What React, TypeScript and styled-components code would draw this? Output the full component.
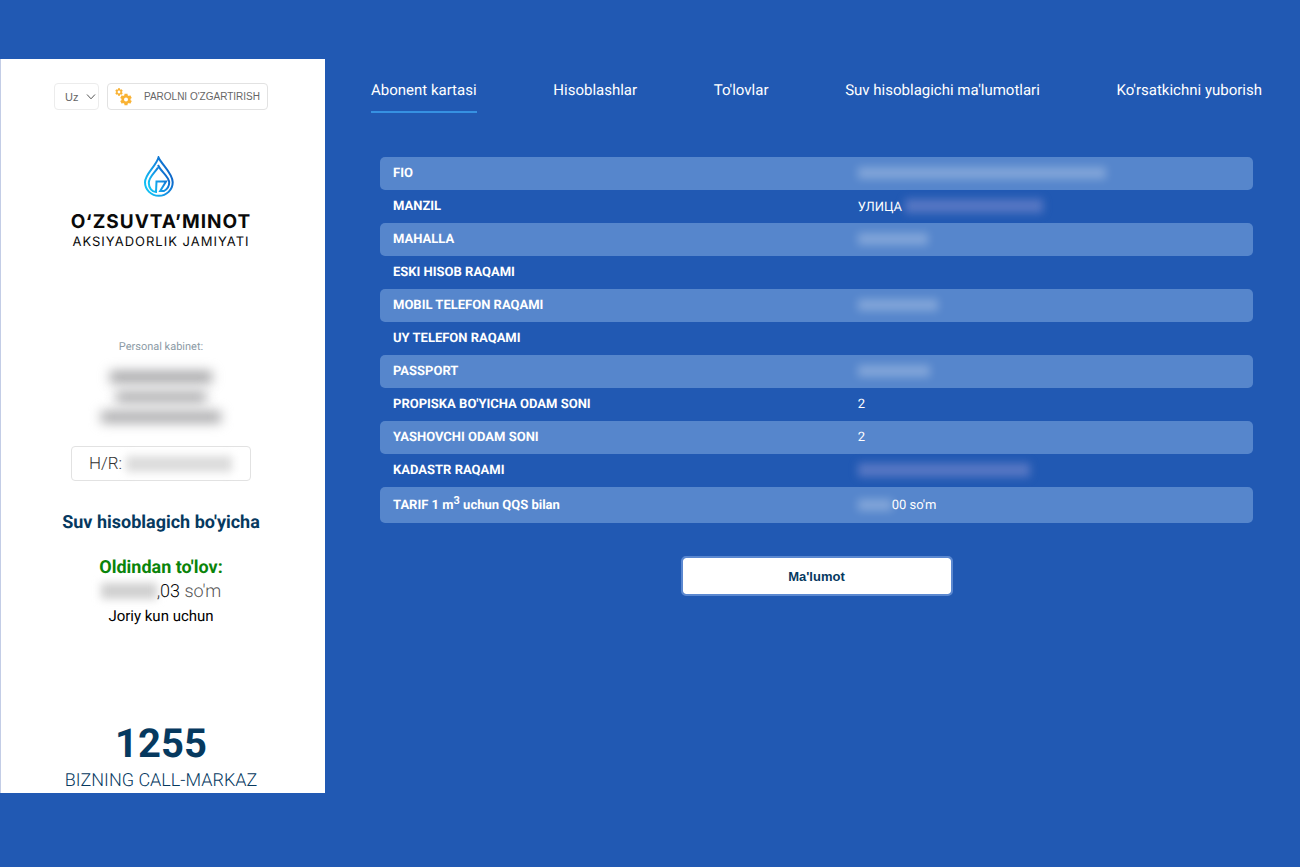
import React from "react";
import styled, { createGlobalStyle } from "styled-components";

const GlobalStyle = createGlobalStyle`
  *, *::before, *::after { box-sizing: border-box; }
  body {
    margin: 0;
    background: #2159b3;
    font-family: Roboto, "Liberation Sans", sans-serif;
    color: #fff;
    text-rendering: geometricPrecision;
  }
`;

const Page = styled.div`
  display: grid;
  grid-template-columns: minmax(300px, 1fr) 3fr;
  align-items: start;
  min-height: 100vh;
  padding: 59px 0;
`;

const Sidebar = styled.aside`
  display: flex;
  flex-direction: column;
  align-items: center;
  padding: 24px 4px 0 0;
  border-left: 1px solid #c3cde6;
  background: #fff;
  color: #000;
  text-align: center;
`;

const Controls = styled.div`
  display: flex;
  gap: 8px;
  margin-bottom: 46px;
`;

const SelectBox = styled.label`
  position: relative;
  display: block;
  width: 45px;
`;

const LanguageSelect = styled.select`
  width: 100%;
  height: 27px;
  padding: 0 0 0 10px;
  appearance: none;
  border: 1px solid #ececec;
  border-radius: 4px;
  background: #fff;
  color: #666;
  font: 11px "Liberation Sans", Arial, sans-serif;
`;

const Chevron = styled.svg`
  position: absolute;
  top: 10px;
  right: 3px;
  pointer-events: none;
`;

const PasswordButton = styled.button`
  display: flex;
  align-items: center;
  justify-content: space-between;
  width: 161px;
  height: 27px;
  padding: 0 7px;
  border: 1px solid #e2e2e2;
  border-radius: 4px;
  background: #fff;
  color: #666;
  font: 10px "Liberation Sans", Arial, sans-serif;
  white-space: nowrap;
`;

const Brand = styled.div`
  display: flex;
  flex-direction: column;
  align-items: center;
  color: #0a0a0a;
`;

const BrandName = styled.div`
  margin-top: 12px;
  font: 700 19px/24px Inter, sans-serif;
  letter-spacing: 1px;
  white-space: nowrap;
`;

const BrandKind = styled.div`
  font: 400 13px/16px Inter, sans-serif;
  letter-spacing: 1px;
  white-space: nowrap;
`;

const CabinetLabel = styled.p`
  margin: 88px 0 12px;
  color: #8c9ba6;
  font-size: 11px;
  line-height: 18px;
`;

const HiddenName = styled.div`
  display: flex;
  flex-direction: column;
  align-items: center;
  gap: 8px;
  padding: 3px 0;
`;

const Redacted = styled.span<{ $width: number; $tone: string; $height?: number; $blur?: number }>`
  display: inline-block;
  width: ${(p) => p.$width}px;
  height: ${(p) => p.$height ?? 12}px;
  background: ${(p) => p.$tone};
  filter: blur(${(p) => p.$blur ?? 4}px);
  vertical-align: -2px;
`;

const Account = styled.div`
  display: flex;
  align-items: center;
  gap: 4px;
  width: 180px;
  height: 35px;
  margin: 20px 0 30px;
  padding: 0 17px;
  border: 1px solid #e2e2e2;
  border-radius: 4px;
  color: #333;
  font-size: 17px;
  font-weight: 300;
`;

const MeterTitle = styled.h2`
  margin: 0 0 21px;
  color: #06395f;
  font-size: 18px;
  font-weight: 700;
  line-height: 24px;
`;

const Balance = styled.div`
  font-size: 18px;
  font-weight: 300;
  line-height: 24px;
`;

const BalanceTitle = styled.div`
  color: #0a840a;
  font-weight: 700;
`;

const Currency = styled.span`
  color: #555;
`;

const BalanceNote = styled.div`
  font-size: 15px;
  font-weight: 400;
`;

const CallCenter = styled.footer`
  margin-top: 92px;
  color: #06395f;
  font-size: 18px;
  font-weight: 300;
  line-height: 24px;
`;

const CallNumber = styled.div`
  padding-bottom: 1px;
  font-size: 40px;
  font-weight: 700;
  line-height: 48px;
`;

const Main = styled.main`
  display: flex;
  flex-direction: column;
  padding: 17px 38px 0 46px;
`;

const Tabs = styled.nav`
  display: flex;
  justify-content: space-between;
  margin-bottom: 44px;
`;

const Tab = styled.a<{ $active?: boolean }>`
  padding: 4px 0 11px;
  border-bottom: 2px solid ${(p) => (p.$active ? "#3691e2" : "transparent")};
  color: #fff;
  font-size: 15px;
  line-height: 20px;
  text-decoration: none;
  white-space: nowrap;
`;

const CardTable = styled.table`
  margin: 0 9px;
  border-spacing: 0;
  table-layout: fixed;
  font-size: 13px;
  line-height: 15px;
  text-align: left;
`;

const Row = styled.tr<{ $tall?: boolean }>`
  height: ${(p) => (p.$tall ? 36 : 33)}px;

  &:nth-child(odd) > * {
    background: #5686cc;
  }
`;

const LabelCell = styled.th`
  width: 53%;
  padding: 0 13px;
  border-radius: 5px 0 0 5px;
  font-weight: 700;

  sup {
    font-size: 11px;
    line-height: 0;
  }
`;

const ValueCell = styled.td`
  padding: 0 15px;
  border-radius: 0 5px 5px 0;
  white-space: nowrap;
`;

const InfoButton = styled.button`
  align-self: center;
  width: 272px;
  height: 40px;
  margin-top: 33px;
  border: 2px solid #5b88d0;
  border-radius: 5px;
  background: #fff;
  background-clip: padding-box;
  color: #06395f;
  font: 700 13px "Liberation Sans", Arial, sans-serif;
`;

function gearPath(cx: number, cy: number, outer: number, inner: number, hole: number) {
  const points: string[] = [];
  for (let i = 0; i < 6; i++) {
    const base = (i * Math.PI) / 3 - Math.PI / 2;
    const corners: [number, number][] = [
      [inner, -0.36],
      [outer, -0.26],
      [outer, 0.26],
      [inner, 0.36],
    ];
    corners.forEach(([r, a]) =>
      points.push(`${(cx + r * Math.cos(base + a)).toFixed(2)} ${(cy + r * Math.sin(base + a)).toFixed(2)}`)
    );
  }
  return `M${points.join("L")}ZM${cx - hole} ${cy}a${hole} ${hole} 0 1 0 ${hole * 2} 0a${hole} ${hole} 0 1 0 ${-hole * 2} 0Z`;
}

const GearsIcon = () => (
  <svg width="18" height="18" viewBox="0 0 18 18" fill="#f9b233" fillRule="evenodd" aria-hidden="true">
    <path d={gearPath(4, 4, 3.9, 2.9, 1.4)} />
    <path d={gearPath(11, 11.5, 6, 4.6, 2)} />
  </svg>
);

const DropLogo = () => (
  <svg width="36" height="42" viewBox="0 0 36 42" fill="none" aria-hidden="true">
    <defs>
      <linearGradient id="drop" x1="0" y1="0.8" x2="1" y2="0.2">
        <stop offset="0" stopColor="#12c4f5" />
        <stop offset="0.5" stopColor="#1491e4" />
        <stop offset="1" stopColor="#0b55bd" />
      </linearGradient>
    </defs>
    <g stroke="url(#drop)" strokeWidth="2">
      <path d="M15.500 1.500C18.500 8.500 29.700 17 29.700 26.300A13.800 13.500 0 0 1 2 26.300C2 18 12.500 11 15.500 1.500Z" />
      <path d="M15 11.500C12.500 16 5.800 21 5.800 27C5.800 32 9 36 13 36L13.500 25.500H23L17.200 35H21C24.500 33 26.200 30 26.200 26.500C26.200 20.500 18 16 15 9" />
    </g>
  </svg>
);

const onCard = "rgba(255, 255, 255, 0.26)";
const onPage = "rgba(150, 155, 215, 0.45)";

const rows: { label: React.ReactNode; value?: React.ReactNode; tall?: boolean }[] = [
  { label: "FIO", value: <Redacted $width={248} $tone={onCard} /> },
  { label: "MANZIL", value: <>УЛИЦА <Redacted $width={138} $tone={onPage} $height={14} /></> },
  { label: "MAHALLA", value: <Redacted $width={70} $tone={onCard} /> },
  { label: "ESKI HISOB RAQAMI" },
  { label: "MOBIL TELEFON RAQAMI", value: <Redacted $width={80} $tone={onCard} /> },
  { label: "UY TELEFON RAQAMI" },
  { label: "PASSPORT", value: <Redacted $width={72} $tone={onCard} /> },
  { label: "PROPISKA BO'YICHA ODAM SONI", value: "2" },
  { label: "YASHOVCHI ODAM SONI", value: "2" },
  { label: "KADASTR RAQAMI", value: <Redacted $width={172} $tone={onPage} $height={14} /> },
  {
    label: <>TARIF 1 m<sup>3</sup> uchun QQS bilan</>,
    value: <><Redacted $width={34} $tone={onCard} />00 so'm</>,
    tall: true,
  },
];

const tabs = ["Abonent kartasi", "Hisoblashlar", "To'lovlar", "Suv hisoblagichi ma'lumotlari", "Ko'rsatkichni yuborish"];

export default function App() {
  return (
    <>
      <GlobalStyle />
      <Page>
        <Sidebar>
          <Controls>
            <SelectBox>
              <LanguageSelect aria-label="Til" defaultValue="uz">
                <option value="uz">Uz</option>
              </LanguageSelect>
              <Chevron width="10" height="8" viewBox="0 0 10 8" fill="none" stroke="#555" aria-hidden="true">
                <path d="M1 1.500L5 5.800L9 1.500" />
              </Chevron>
            </SelectBox>
            <PasswordButton type="button">
              <GearsIcon />
              PAROLNI O'ZGARTIRISH
            </PasswordButton>
          </Controls>

          <Brand>
            <DropLogo />
            <BrandName>O‘ZSUVTA’MINOT</BrandName>
            <BrandKind>AKSIYADORLIK JAMIYATI</BrandKind>
          </Brand>

          <CabinetLabel>Personal kabinet:</CabinetLabel>
          <HiddenName>
            <Redacted $width={102} $tone="#a4a4a6" $blur={6} />
            <Redacted $width={90} $tone="#aeaeb0" $blur={6} />
            <Redacted $width={120} $tone="#aaaaac" $blur={6} />
          </HiddenName>
          <Account>
            H/R: <Redacted $width={106} $tone="#dcdcdc" $height={16} />
          </Account>

          <MeterTitle>Suv hisoblagich bo'yicha</MeterTitle>
          <Balance>
            <BalanceTitle>Oldindan to'lov:</BalanceTitle>
            <div>
              <Redacted $width={56} $tone="#d0d0d0" $height={16} />,03 <Currency>so'm</Currency>
            </div>
            <BalanceNote>Joriy kun uchun</BalanceNote>
          </Balance>

          <CallCenter>
            <CallNumber>1255</CallNumber>
            BIZNING CALL-MARKAZ
          </CallCenter>
        </Sidebar>

        <Main>
          <Tabs>
            {tabs.map((name, i) => (
              <Tab key={name} href="#" $active={i === 0}>{name}</Tab>
            ))}
          </Tabs>
          <CardTable>
            <tbody>
              {rows.map((row, i) => (
                <Row key={i} $tall={row.tall}>
                  <LabelCell scope="row">{row.label}</LabelCell>
                  <ValueCell>{row.value}</ValueCell>
                </Row>
              ))}
            </tbody>
          </CardTable>
          <InfoButton type="button">Ma'lumot</InfoButton>
        </Main>
      </Page>
    </>
  );
}
